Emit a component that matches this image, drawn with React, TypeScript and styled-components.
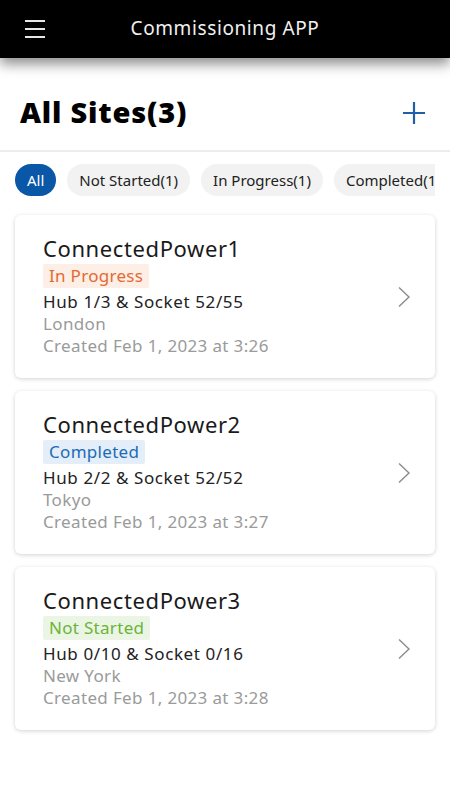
import styled, { createGlobalStyle } from "styled-components";

type Status = "progress" | "completed" | "not";

const sites: {
  name: string;
  status: Status;
  label: string;
  hub: string;
  city: string;
  created: string;
}[] = [
  {
    name: "ConnectedPower1",
    status: "progress",
    label: "In Progress",
    hub: "Hub 1/3 & Socket 52/55",
    city: "London",
    created: "Created Feb 1, 2023 at 3:26",
  },
  {
    name: "ConnectedPower2",
    status: "completed",
    label: "Completed",
    hub: "Hub 2/2 & Socket 52/52",
    city: "Tokyo",
    created: "Created Feb 1, 2023 at 3:27",
  },
  {
    name: "ConnectedPower3",
    status: "not",
    label: "Not Started",
    hub: "Hub 0/10 & Socket 0/16",
    city: "New York",
    created: "Created Feb 1, 2023 at 3:28",
  },
];

const filters = ["All", "Not Started(1)", "In Progress(1)", "Completed(1)"];

const badgeColors: Record<Status, { fg: string; bg: string }> = {
  progress: { fg: "#e26a33", bg: "#fdeee6" },
  completed: { fg: "#1c6bb5", bg: "#e3eef9" },
  not: { fg: "#6cb33a", bg: "#ebf5e4" },
};

export default function App() {
  return (
    <>
      <GlobalStyle />
      <Page>
        <TopBar>
          <Burger aria-label="menu">
            <span />
            <span />
            <span />
          </Burger>
          <AppTitle>Commissioning APP</AppTitle>
        </TopBar>
        <HeaderRow>
          <PageTitle>All Sites(3)</PageTitle>
          <AddButton aria-label="add">
            <svg width="24" height="24" viewBox="0 0 24 24">
              <path d="M12 1v22M1 12h22" stroke="#1f5fa8" strokeWidth="2.2" fill="none" />
            </svg>
          </AddButton>
        </HeaderRow>
        <Chips>
          {filters.map((f, i) => (
            <Chip key={f} $active={i === 0}>
              {f}
            </Chip>
          ))}
        </Chips>
        <List>
          {sites.map((s) => (
            <Card key={s.name}>
              <Info>
                <SiteName>{s.name}</SiteName>
                <Badge $status={s.status}>{s.label}</Badge>
                <Hub>{s.hub}</Hub>
                <Meta>{s.city}</Meta>
                <Meta>{s.created}</Meta>
              </Info>
              <Arrow width="14" height="22" viewBox="0 0 14 22">
                <path d="M2 1.5l10 9.5-10 9.5" />
              </Arrow>
            </Card>
          ))}
        </List>
      </Page>
    </>
  );
}

const GlobalStyle = createGlobalStyle`
  body {
    margin: 0;
    background: #ffffff;
    font-family: "Noto Sans", "Open Sans", sans-serif;
  }
`;

const Page = styled.div`
  width: 450px;
  min-height: 800px;
  background: #ffffff;
`;

const TopBar = styled.header`
  position: relative;
  height: 58px;
  background: #000000;
  display: flex;
  align-items: center;
  justify-content: center;
  box-shadow: 0 6px 12px rgba(0, 0, 0, 0.45);
`;

const Burger = styled.button`
  position: absolute;
  left: 25px;
  top: 20px;
  width: 20px;
  height: 18px;
  padding: 0;
  border: none;
  background: none;
  display: flex;
  flex-direction: column;
  justify-content: space-between;
  span {
    display: block;
    height: 2px;
    background: #e6e6e6;
  }
`;

const AppTitle = styled.h1`
  margin: 0 0 2px;
  color: #f0f0f0;
  font-size: 19px;
  font-weight: 400;
  letter-spacing: 0.6px;
`;

const HeaderRow = styled.div`
  display: flex;
  align-items: center;
  justify-content: space-between;
  padding: 28px 24px 0 20px;
  height: 64px;
  border-bottom: 2px solid #ececec;
`;

const PageTitle = styled.h2`
  margin: 0 0 14px;
  font-size: 29px;
  font-weight: 900;
  color: #000000;
  letter-spacing: 0.8px;
`;

const AddButton = styled.button`
  border: none;
  background: none;
  padding: 0;
  margin-bottom: 10px;
  display: flex;
`;

const Chips = styled.div`
  display: flex;
  gap: 11px;
  margin: 12px 15px 0;
  overflow: hidden;
`;

const Chip = styled.div<{ $active: boolean }>`
  flex-shrink: 0;
  height: 32px;
  padding: 0 12px;
  border-radius: 16px;
  display: flex;
  align-items: center;
  font-size: 15px;
  color: ${(p) => (p.$active ? "#ffffff" : "#222222")};
  background: ${(p) => (p.$active ? "#0a57a8" : "#f2f2f2")};
`;

const List = styled.div`
  display: flex;
  flex-direction: column;
  gap: 13px;
  padding: 19px 15px;
`;

const Card = styled.div`
  height: 163px;
  box-sizing: border-box;
  border-radius: 6px;
  background: #ffffff;
  box-shadow: 0 1px 4px rgba(0, 0, 0, 0.18);
  display: flex;
  align-items: center;
  padding: 0 24px 0 28px;
`;

const Info = styled.div`
  flex: 1;
  display: flex;
  flex-direction: column;
  align-items: flex-start;
  margin-top: -3px;
`;

const SiteName = styled.div`
  font-size: 22px;
  letter-spacing: 0.6px;
  color: #1a1a1a;
  line-height: 28px;
  margin-bottom: 2px;
`;

const Badge = styled.span<{ $status: Status }>`
  padding: 0 6px;
  line-height: 24px;
  font-size: 17px;
  letter-spacing: 0.3px;
  border-radius: 2px;
  color: ${(p) => badgeColors[p.$status].fg};
  background: ${(p) => badgeColors[p.$status].bg};
  margin-bottom: 3px;
`;

const Hub = styled.div`
  font-size: 17px;
  letter-spacing: 0.6px;
  color: #222222;
  line-height: 22px;
`;

const Meta = styled.div`
  font-size: 17px;
  letter-spacing: 0.35px;
  color: #9a9a9a;
  line-height: 22px;
`;

const Arrow = styled.svg`
  fill: none;
  stroke: #8c8c8c;
  stroke-width: 1.4;
`;
